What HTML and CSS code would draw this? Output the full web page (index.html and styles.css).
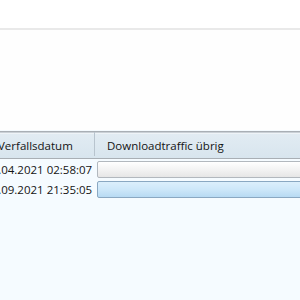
FILE: index.html
```html
<!DOCTYPE html>
<html lang="de">
<head>
  <meta charset="UTF-8" />
  <title>Downloads</title>
  <link rel="stylesheet" href="styles.css">
</head>
<body>
  <div class="toolbar"></div>
  <div class="spacer"></div>
  <div class="list">
    <div class="head">
      <div class="col first">Verfallsdatum</div>
      <div class="col">Downloadtraffic übrig</div>
    </div>
    <div class="row">
      <div class="cell first">17.04.2021 02:58:07</div>
      <div class="cell"><div class="bar"></div></div>
    </div>
    <div class="row">
      <div class="cell first">29.09.2021 21:35:05</div>
      <div class="cell"><div class="bar blue"></div></div>
    </div>
  </div>
</body>
</html>
```
FILE: styles.css
```css
body {
  margin: 0;
  font-family: "Open Sans", "DejaVu Sans", sans-serif;
  font-size: 11.5px;
  color: #141414;
  background: #f5fbff;
  height: 300px;
  overflow: hidden;
}
.toolbar {
  height: 28px;
  background: #ffffff;
  border-bottom: 2px solid #e9e9e9;
}
.spacer {
  height: 100px;
  background: #fefefe;
}
.list {
  margin-left: -20px;
  width: 340px;
}
.head {
  display: grid;
  grid-template-columns: 115px 1fr;
  height: 24px;
  border-top: 1px solid #a9afb5;
  box-shadow: inset 0 1px 0 #c9d0d6, inset 0 2px 0 #eef3f7;
  border-bottom: 1px solid #a9afb5;
  background: linear-gradient(#e2ecf3, #d8e5ee);
  margin-top: 1px;
  padding-bottom: 2px;
}
.head .col {
  display: flex;
  align-items: center;
  padding-left: 12px;
  padding-top: 2px;
  white-space: nowrap;
  overflow: hidden;
}
.head .col.first {
  padding-left: 18px;
  border-right: 1px solid #b8c4ce;
}
.row {
  display: grid;
  grid-template-columns: 116px 1fr;
  height: 20px;
}
.cell {
  display: flex;
  align-items: center;
  white-space: nowrap;
  overflow: hidden;
}
.cell.first {
  padding-left: 5px;
}
.bar {
  height: 15px;
  width: 100%;
  margin-left: 1px;
  border: 1px solid #b2b8be;
  border-radius: 2px;
  background: linear-gradient(#ffffff, #f3f3f3 50%, #e6e6e6);
}
.bar.blue {
  border-color: #8aa8c2;
  background: linear-gradient(#dcefFc, #cde7f9 50%, #b7daf3);
}
```
